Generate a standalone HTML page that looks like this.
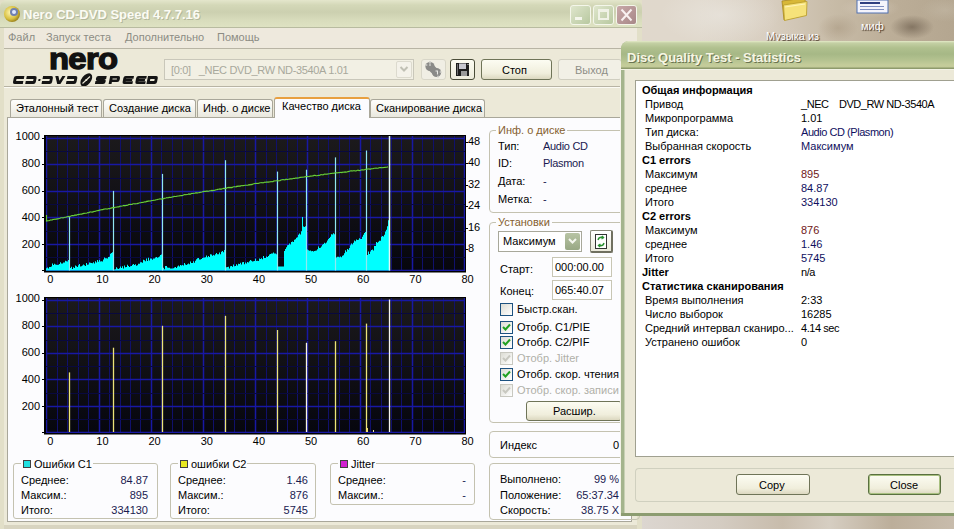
<!DOCTYPE html>
<html><head><meta charset="utf-8"><style>
html,body{margin:0;padding:0;}
body{width:954px;height:529px;overflow:hidden;position:relative;font-family:"Liberation Sans", sans-serif;font-size:11px;}
.t{position:absolute;white-space:nowrap;line-height:14px;font-family:"Liberation Sans", sans-serif;font-size:11px;}
</style></head><body>
<div style="position:absolute;left:0;top:0;width:954px;height:529px;background:
radial-gradient(ellipse 22px 12px at 912px 27px, rgba(110,95,78,0.7), rgba(110,95,78,0) 100%),
radial-gradient(ellipse 20px 14px at 838px 28px, rgba(150,130,105,0.35), rgba(150,130,105,0) 100%),
radial-gradient(ellipse 30px 10px at 870px 8px, rgba(220,210,195,0.5), rgba(220,210,195,0) 100%),
radial-gradient(ellipse 25px 10px at 790px 38px, rgba(215,205,190,0.5), rgba(215,205,190,0) 100%),
radial-gradient(ellipse 25px 12px at 945px 10px, rgba(200,190,172,0.45), rgba(200,190,172,0) 100%),
radial-gradient(ellipse 60px 30px at 720px 15px, rgba(235,232,226,0.6), rgba(235,232,226,0) 100%),
linear-gradient(90deg,#e0d8ce 0px,#e0d8cc 700px,#d8cec0 770px,#c8bca8 830px,#bcae98 890px,#b4a690 954px);"></div>
<div style="position:absolute;left:642px;top:514px;width:312px;height:15px;background:
linear-gradient(90deg,#dcd6d0,#d4ccc2 25%,#c8bcac 45%,#d6cec2 60%,#bcae9a 80%,#c8bcac)"></div><div style="position:absolute;left:0px;top:0px;width:642px;height:529px;background:#e2dfc8;"></div>
<div style="position:absolute;left:0px;top:0px;width:642px;height:28px;background:linear-gradient(180deg,#e4e6cc 0px,#d4d8b8 5px,#ccd0b0 12px,#d8dcbc 20px,#dee2c2 27px);border-radius:7px 7px 0 0;"></div>
<svg style="position:absolute;left:3px;top:5px" width="18" height="18" viewBox="0 0 18 18">
<defs><radialGradient id="ig" cx="0.4" cy="0.4" r="0.6"><stop offset="0" stop-color="#fff6b0"/><stop offset="0.7" stop-color="#d8c040"/><stop offset="1" stop-color="#a08820"/></radialGradient></defs>
<circle cx="9" cy="9" r="8" fill="url(#ig)"/><circle cx="11" cy="7" r="4" fill="#7080b0"/><circle cx="11" cy="7" r="2" fill="#e0e8ff"/></svg><div class="t" style="left:23px;top:8px;font-size:13px;font-weight:bold;color:#fbfbf4;text-shadow:1px 1px 0 #b4b89c;letter-spacing:0px">Nero CD-DVD Speed 4.7.7.16</div>
<div style="position:absolute;left:570px;top:5px;width:21px;height:20px;background:linear-gradient(135deg,#dfe6cc,#b8c8a0);border:1px solid #f4f6ea;border-radius:3px;box-sizing:border-box;"></div>
<div style="position:absolute;left:593px;top:5px;width:21px;height:20px;background:linear-gradient(135deg,#dfe6cc,#b8c8a0);border:1px solid #f4f6ea;border-radius:3px;box-sizing:border-box;"></div>
<div style="position:absolute;left:616px;top:5px;width:21px;height:20px;background:linear-gradient(135deg,#c8a8a8,#a88888);border:1px solid #f4f6ea;border-radius:3px;box-sizing:border-box;"></div>
<div style="position:absolute;left:575px;top:17px;width:7px;height:3px;background:#f4f6ec;"></div>
<div style="position:absolute;left:598px;top:9px;width:11px;height:11px;border:2px solid #f0f2e6;border-top-width:3px;box-sizing:border-box;"></div>
<svg style="position:absolute;left:616px;top:5px" width="21" height="20"><path d="M5.5 4.5 L15.5 15.5 M15.5 4.5 L5.5 15.5" stroke="#f8f0f0" stroke-width="2"/></svg>
<div style="position:absolute;left:4px;top:28px;width:633px;height:501px;background:#ece9d8;"></div>
<div style="position:absolute;left:4px;top:28px;width:633px;height:20px;background:#eee9dd;"></div>
<div style="position:absolute;left:0px;top:27px;width:642px;height:1px;background:#b8bba0;"></div>
<div style="position:absolute;left:4px;top:48px;width:633px;height:1px;background:#b8b4a4;"></div>
<div class="t" style="left:8px;top:30px;font-size:11px;color:#8c8c84;font-weight:normal;">Файл</div>
<div class="t" style="left:46px;top:30px;font-size:11px;color:#8c8c84;font-weight:normal;">Запуск теста</div>
<div class="t" style="left:125px;top:30px;font-size:11px;color:#8c8c84;font-weight:normal;">Дополнительно</div>
<div class="t" style="left:217px;top:30px;font-size:11px;color:#8c8c84;font-weight:normal;">Помощь</div>
<div class="t" style="left:49px;top:43px;font-size:29px;font-weight:bold;color:#111;letter-spacing:-0.6px;line-height:32px;transform:scaleX(1.13);transform-origin:0 0;-webkit-text-stroke:1.3px #111">nero</div>
<svg style="position:absolute;left:0;top:0" width="170" height="90"><g fill="#141414" fill-rule="evenodd"><path transform="translate(12.6,76) matrix(1,0,-0.2,1,1.6,0)" d="M10.2,0 H2 Q0,0 0,2 V6 Q0,8 2,8 H10.2 V5.1 H2.9 V2.9 H10.2 Z"/><path transform="translate(25.2,76) matrix(1,0,-0.2,1,1.6,0)" d="M0,0 H8.2 Q10.2,0 10.2,2 V6 Q10.2,8 8.2,8 H0 V5.1 H7.299999999999999 V2.9 H0 Z"/><path transform="translate(41.5,76) matrix(1,0,-0.2,1,1.6,0)" d="M0,0 H8.2 Q10.2,0 10.2,2 V6 Q10.2,8 8.2,8 H0 V5.1 H7.299999999999999 V2.9 H0 Z"/><path transform="translate(53.7,76) matrix(1,0,-0.2,1,1.6,0)" d="M0,0 H3.1 L5.1,4.699999999999999 L7.099999999999999,0 H10.2 L6.699999999999999,8 H3.4999999999999996 Z"/><path transform="translate(65.9,76) matrix(1,0,-0.2,1,1.6,0)" d="M0,0 H8.2 Q10.2,0 10.2,2 V6 Q10.2,8 8.2,8 H0 V5.1 H7.299999999999999 V2.9 H0 Z"/><path transform="translate(94.9,76) matrix(1,0,-0.2,1,1.6,0)" d="M10.2,0 H2 Q0,0 0,2 V3 Q0,5 2,5 H7.299999999999999 V5.1 H0 V8 H8.2 Q10.2,8 10.2,6 V5 Q10.2,3 8.2,3 H2.9 V2.9 H10.2 Z"/><path transform="translate(108.6,76) matrix(1,0,-0.2,1,1.6,0)" d="M0,8 V0 H8.2 Q10.2,0 10.2,2 V4 Q10.2,6 8.2,6 H2.9 V8 Z M2.9,2.6 V3.4 H7.299999999999999 V2.6 Z"/><path transform="translate(122.2,76) matrix(1,0,-0.2,1,1.6,0)" d="M10.2,0 H2 Q0,0 0,2 V6 Q0,8 2,8 H10.2 V5.3 H2.9 V4.9 H9.2 V3.1 H2.9 V2.6999999999999997 H10.2 Z"/><path transform="translate(135.0,76) matrix(1,0,-0.2,1,1.6,0)" d="M10.2,0 H2 Q0,0 0,2 V6 Q0,8 2,8 H10.2 V5.3 H2.9 V4.9 H9.2 V3.1 H2.9 V2.6999999999999997 H10.2 Z"/><path transform="translate(146.4,76) matrix(1,0,-0.2,1,1.6,0)" d="M0,0 H8.2 Q10.2,0 10.2,2 V6 Q10.2,8 8.2,8 H0 Z M2.9,2.9 V5.1 H7.299999999999999 V2.9 Z"/><rect transform="translate(38.2,79) matrix(1,0,-0.2,1,0.4,0)" x="0" y="0" width="2" height="2"/><ellipse cx="86.3" cy="79.9" rx="4.6" ry="7.6" transform="rotate(38 86.3 79.9)"/></g><path d="M82.5 83.5 L90 76.5" stroke="#ece9d8" stroke-width="1.1"/><circle cx="86.3" cy="79.9" r="1" fill="#ece9d8"/></svg><div style="position:absolute;left:164px;top:59px;width:250px;height:21px;border:1px solid #c9c7ba;background:#f2f0e4;box-sizing:border-box;"></div>
<div class="t" style="left:171px;top:63px;font-size:11px;color:#a8a89c;font-weight:normal;letter-spacing:-0.35px">[0:0]&nbsp;&nbsp; _NEC DVD_RW ND-3540A 1.01</div>
<div style="position:absolute;left:396px;top:61px;width:16px;height:17px;background:#f4f2ea;border:1px solid #dcdace;border-radius:2px;box-sizing:border-box;"></div>
<svg style="position:absolute;left:399px;top:65px" width="10" height="8"><path d="M1.5 2 L5 5.5 L8.5 2" stroke="#c0c0b4" stroke-width="2" fill="none"/></svg>
<div style="position:absolute;left:421px;top:59px;width:25px;height:21px;border:1px solid #d8d6c8;background:#f0eee4;border-radius:3px;box-sizing:border-box;"></div>
<svg style="position:absolute;left:421px;top:59px" width="25" height="21"><g fill="#8a8a88"><circle cx="9" cy="7.5" r="4.6"/><circle cx="15.5" cy="13.5" r="4.6"/><rect x="8" y="7" width="8" height="7" transform="rotate(45 12 10.5)"/></g><g fill="#c4c4c0"><circle cx="9" cy="3.5" r="1.2"/><circle cx="5.5" cy="6" r="1"/><circle cx="19.5" cy="13" r="1"/><circle cx="17" cy="17.5" r="1.1"/></g><path d="M8 6 L10 6 M14.5 12 L16.5 12 L16.5 15.5" stroke="#e8e8e4" stroke-width="1.1" fill="none"/></svg>
<div style="position:absolute;left:450px;top:59px;width:25px;height:21px;border:1px solid #4a4c38;background:linear-gradient(180deg,#fcfcf2,#eeecdc);border-radius:3px;box-sizing:border-box;"></div>
<svg style="position:absolute;left:455px;top:62px" width="16" height="16"><rect x="1" y="1" width="13" height="13" fill="#1e1e1e"/><rect x="2" y="2" width="1" height="11" fill="#707070"/><rect x="4" y="1.5" width="7" height="5.5" fill="#c8c8d0"/><rect x="6" y="9" width="6" height="5" fill="#9a9a9a"/><rect x="12.5" y="2" width="1" height="1" fill="#e0e0e0"/></svg>
<div style="position:absolute;left:481px;top:59px;width:71px;height:21px;border:1px solid #6f7458;background:linear-gradient(180deg,#fcfcf2,#f0eedc 70%,#dcd8c0);border-radius:3px;box-sizing:border-box;"></div>
<div class="t" style="left:502px;top:63px;font-size:11px;color:#000;font-weight:normal;">Стоп</div>
<div style="position:absolute;left:558px;top:59px;width:64px;height:21px;border:1px solid #d0cec0;background:#f2f0e6;border-radius:3px;box-sizing:border-box;"></div>
<div class="t" style="left:575px;top:63px;font-size:11px;color:#8e8e86;font-weight:normal;">Выход</div>
<div style="position:absolute;left:4px;top:86px;width:633px;height:1px;background:#b8b4a4;"></div>
<div style="position:absolute;left:4px;top:87px;width:633px;height:1px;background:#fbfaf4;"></div>
<div style="position:absolute;left:10px;top:99px;width:92px;height:19px;background:linear-gradient(180deg,#fefefc,#f2f1ea 60%,#e8e6dc);border:1px solid #a9a79a;border-bottom:none;border-radius:3px 3px 0 0;box-sizing:border-box;"></div>
<div class="t" style="left:16px;top:101px;font-size:11px;color:#000;font-weight:normal;">Эталонный тест</div>
<div style="position:absolute;left:103px;top:99px;width:93px;height:19px;background:linear-gradient(180deg,#fefefc,#f2f1ea 60%,#e8e6dc);border:1px solid #a9a79a;border-bottom:none;border-radius:3px 3px 0 0;box-sizing:border-box;"></div>
<div class="t" style="left:109px;top:101px;font-size:11px;color:#000;font-weight:normal;">Создание диска</div>
<div style="position:absolute;left:197px;top:99px;width:76px;height:19px;background:linear-gradient(180deg,#fefefc,#f2f1ea 60%,#e8e6dc);border:1px solid #a9a79a;border-bottom:none;border-radius:3px 3px 0 0;box-sizing:border-box;"></div>
<div class="t" style="left:203px;top:101px;font-size:11px;color:#000;font-weight:normal;">Инф. о диске</div>
<div style="position:absolute;left:370px;top:99px;width:115px;height:19px;background:linear-gradient(180deg,#fefefc,#f2f1ea 60%,#e8e6dc);border:1px solid #a9a79a;border-bottom:none;border-radius:3px 3px 0 0;box-sizing:border-box;"></div>
<div class="t" style="left:376px;top:101px;font-size:11px;color:#000;font-weight:normal;">Сканирование диска</div>
<div style="position:absolute;left:4px;top:525px;width:633px;height:4px;background:#d8d4c0;"></div>
<div style="position:absolute;left:7px;top:117px;width:625px;height:405px;background:#fcfcfe;border:1px solid #a9a79a;box-sizing:border-box;"></div>
<div style="position:absolute;left:274px;top:97px;width:96px;height:21px;background:#fcfcfe;border:1px solid #a9a79a;border-bottom:none;border-top:2px solid #e8a040;border-radius:3px 3px 0 0;box-sizing:border-box;"></div>
<div class="t" style="left:282px;top:99px;font-size:11px;color:#000;font-weight:normal;">Качество диска</div>
<div style="position:absolute;left:489px;top:130px;width:151px;height:83px;border:1px solid #c4c2b0;border-radius:4px;box-sizing:border-box;"></div>
<div class="t" style="left:496px;top:123px;padding:0 2px;background:#fcfcfe;font-size:11px;color:#85602e">Инф. о диске</div>
<div class="t" style="left:498px;top:139px;font-size:11px;color:#000;font-weight:normal;">Тип:</div>
<div class="t" style="left:543px;top:139px;font-size:11px;color:#1a1a50;font-weight:normal;letter-spacing:-0.3px">Audio CD</div>
<div class="t" style="left:498px;top:156px;font-size:11px;color:#000;font-weight:normal;">ID:</div>
<div class="t" style="left:543px;top:156px;font-size:11px;color:#1a1a50;font-weight:normal;letter-spacing:-0.3px">Plasmon</div>
<div class="t" style="left:498px;top:174px;font-size:11px;color:#000;font-weight:normal;">Дата:</div>
<div class="t" style="left:543px;top:174px;font-size:11px;color:#1a1a50;font-weight:normal;letter-spacing:-0.3px">-</div>
<div class="t" style="left:498px;top:192px;font-size:11px;color:#000;font-weight:normal;">Метка:</div>
<div class="t" style="left:543px;top:192px;font-size:11px;color:#1a1a50;font-weight:normal;letter-spacing:-0.3px">-</div>
<div style="position:absolute;left:489px;top:222px;width:151px;height:201px;border:1px solid #c4c2b0;border-radius:4px;box-sizing:border-box;"></div>
<div class="t" style="left:496px;top:215px;padding:0 2px;background:#fcfcfe;font-size:11px;color:#85602e">Установки</div>
<div style="position:absolute;left:498px;top:231px;width:84px;height:21px;border:1px solid #a8a89a;background:#fff;box-sizing:border-box;"></div>
<div class="t" style="left:503px;top:234px;font-size:11px;color:#000;font-weight:normal;">Максимум</div>
<div style="position:absolute;left:565px;top:233px;width:15px;height:17px;background:linear-gradient(180deg,#b8c4a4,#98a884);border-radius:2px;"></div>
<svg style="position:absolute;left:567px;top:237px" width="11" height="9"><path d="M2 2 L5.5 5.5 L9 2" stroke="#f4f6ee" stroke-width="2" fill="none"/></svg>
<div style="position:absolute;left:590px;top:230px;width:23px;height:23px;border:1px solid #888878;border-right:2px solid #707060;border-bottom:2px solid #707060;background:linear-gradient(180deg,#fff,#eceadc);border-radius:2px;box-sizing:border-box;"></div>
<svg style="position:absolute;left:593px;top:233px" width="16" height="17"><rect x="2.5" y="1.5" width="11" height="14" fill="#fff" stroke="#333" stroke-width="1"/><path d="M5 7 Q6 3.5 10 4.5 M9 3 L10.5 4.6 L8.5 6" stroke="#2a9030" stroke-width="1.4" fill="none"/><path d="M11 10 Q10 13.5 6 12.5 M7 14 L5.5 12.4 L7.5 11" stroke="#2a9030" stroke-width="1.4" fill="none"/></svg>
<div class="t" style="left:500px;top:262px;font-size:11px;color:#000;font-weight:normal;">Старт:</div>
<div style="position:absolute;left:552px;top:257px;width:60px;height:20px;border:1px solid #c8c6b4;background:#fff;box-sizing:border-box;"></div>
<div class="t" style="left:555px;top:260px;font-size:11px;color:#000;font-weight:normal;">000:00.00</div>
<div class="t" style="left:500px;top:284px;font-size:11px;color:#000;font-weight:normal;">Конец:</div>
<div style="position:absolute;left:552px;top:280px;width:60px;height:20px;border:1px solid #c8c6b4;background:#fff;box-sizing:border-box;"></div>
<div class="t" style="left:555px;top:283px;font-size:11px;color:#000;font-weight:normal;">065:40.07</div>
<div style="position:absolute;left:500px;top:303px;width:13px;height:13px;border:1px solid #1c5180;background:linear-gradient(135deg,#dcdcd4,#fff);box-sizing:border-box;"></div>
<div class="t" style="left:517px;top:302px;font-size:11px;color:#000;font-weight:normal;">Быстр.скан.</div>
<div style="position:absolute;left:500px;top:321px;width:13px;height:13px;border:1px solid #1c5180;background:linear-gradient(135deg,#dcdcd4,#fff);box-sizing:border-box;"></div>
<svg style="position:absolute;left:500px;top:321px" width="13" height="13"><path d="M3 6 L5.5 8.5 L10 3.5" stroke="#21a121" stroke-width="2" fill="none"/></svg>
<div class="t" style="left:517px;top:320px;font-size:11px;color:#000;font-weight:normal;">Отобр. C1/PIE</div>
<div style="position:absolute;left:500px;top:336px;width:13px;height:13px;border:1px solid #1c5180;background:linear-gradient(135deg,#dcdcd4,#fff);box-sizing:border-box;"></div>
<svg style="position:absolute;left:500px;top:336px" width="13" height="13"><path d="M3 6 L5.5 8.5 L10 3.5" stroke="#21a121" stroke-width="2" fill="none"/></svg>
<div class="t" style="left:517px;top:335px;font-size:11px;color:#000;font-weight:normal;">Отобр. C2/PIF</div>
<div style="position:absolute;left:500px;top:352px;width:13px;height:13px;border:1px solid #c8c8c0;background:linear-gradient(135deg,#dcdcd4,#fff);box-sizing:border-box;"></div>
<svg style="position:absolute;left:500px;top:352px" width="13" height="13"><path d="M3 6 L5.5 8.5 L10 3.5" stroke="#c8c8c0" stroke-width="2" fill="none"/></svg>
<div class="t" style="left:517px;top:351px;font-size:11px;color:#b0b0a8;font-weight:normal;">Отобр. Jitter</div>
<div style="position:absolute;left:500px;top:368px;width:13px;height:13px;border:1px solid #1c5180;background:linear-gradient(135deg,#dcdcd4,#fff);box-sizing:border-box;"></div>
<svg style="position:absolute;left:500px;top:368px" width="13" height="13"><path d="M3 6 L5.5 8.5 L10 3.5" stroke="#21a121" stroke-width="2" fill="none"/></svg>
<div class="t" style="left:517px;top:367px;font-size:11px;color:#000;font-weight:normal;">Отобр. скор. чтения</div>
<div style="position:absolute;left:500px;top:384px;width:13px;height:13px;border:1px solid #c8c8c0;background:linear-gradient(135deg,#dcdcd4,#fff);box-sizing:border-box;"></div>
<svg style="position:absolute;left:500px;top:384px" width="13" height="13"><path d="M3 6 L5.5 8.5 L10 3.5" stroke="#c8c8c0" stroke-width="2" fill="none"/></svg>
<div class="t" style="left:517px;top:383px;font-size:11px;color:#b0b0a8;font-weight:normal;">Отобр. скор. записи</div>
<div style="position:absolute;left:526px;top:401px;width:96px;height:20px;border:1px solid #6f7458;background:linear-gradient(180deg,#fcfcf2,#f0eedc 70%,#dcd8c0);border-radius:3px;box-sizing:border-box;"></div>
<div class="t" style="left:553px;top:404px;font-size:11px;color:#000;font-weight:normal;">Расшир.</div>
<div style="position:absolute;left:489px;top:431px;width:151px;height:27px;border:1px solid #c4c2b0;border-radius:4px;box-sizing:border-box;"></div>
<div class="t" style="left:500px;top:438px;font-size:11px;color:#000;font-weight:normal;">Индекс</div>
<div class="t" style="left:319px;width:300px;text-align:right;top:438px;font-size:11px;color:#000;font-weight:normal;">0</div>
<div style="position:absolute;left:489px;top:463px;width:151px;height:57px;border:1px solid #c4c2b0;border-radius:4px;box-sizing:border-box;"></div>
<div class="t" style="left:500px;top:472px;font-size:11px;color:#000;font-weight:normal;">Выполнено:</div>
<div class="t" style="left:319px;width:300px;text-align:right;top:472px;font-size:11px;color:#1a1a50;font-weight:normal;">99 %</div>
<div class="t" style="left:500px;top:488px;font-size:11px;color:#000;font-weight:normal;">Положение:</div>
<div class="t" style="left:319px;width:300px;text-align:right;top:488px;font-size:11px;color:#1a1a50;font-weight:normal;">65:37.34</div>
<div class="t" style="left:500px;top:503px;font-size:11px;color:#000;font-weight:normal;">Скорость:</div>
<div class="t" style="left:319px;width:300px;text-align:right;top:503px;font-size:11px;color:#1a1a50;font-weight:normal;">38.75 X</div>
<div style="position:absolute;left:13px;top:463px;width:145px;height:56px;border:1px solid #c4c2b0;border-radius:3px;box-sizing:border-box;"></div>
<div class="t" style="left:21px;top:457px;padding:0 1px 0 2px;background:#fcfcfe;"><span style="display:inline-block;width:8px;height:8px;background:#20e0e0;border:1px solid #404040;box-sizing:border-box;margin-right:3px;vertical-align:-0px"></span>Ошибки C1</div>
<div class="t" style="left:21px;top:473px;font-size:11px;color:#000;font-weight:normal;">Среднее:</div>
<div class="t" style="left:-152px;width:300px;text-align:right;top:473px;font-size:11px;color:#1a1a50;font-weight:normal;">84.87</div>
<div class="t" style="left:21px;top:488px;font-size:11px;color:#000;font-weight:normal;">Максим.:</div>
<div class="t" style="left:-152px;width:300px;text-align:right;top:488px;font-size:11px;color:#1a1a50;font-weight:normal;">895</div>
<div class="t" style="left:21px;top:503px;font-size:11px;color:#000;font-weight:normal;">Итого:</div>
<div class="t" style="left:-152px;width:300px;text-align:right;top:503px;font-size:11px;color:#1a1a50;font-weight:normal;">334130</div>
<div style="position:absolute;left:170px;top:463px;width:146px;height:56px;border:1px solid #c4c2b0;border-radius:3px;box-sizing:border-box;"></div>
<div class="t" style="left:178px;top:457px;padding:0 1px 0 2px;background:#fcfcfe;"><span style="display:inline-block;width:8px;height:8px;background:#e8e820;border:1px solid #404040;box-sizing:border-box;margin-right:3px;vertical-align:-0px"></span>ошибки C2</div>
<div class="t" style="left:178px;top:473px;font-size:11px;color:#000;font-weight:normal;">Среднее:</div>
<div class="t" style="left:8px;width:300px;text-align:right;top:473px;font-size:11px;color:#1a1a50;font-weight:normal;">1.46</div>
<div class="t" style="left:178px;top:488px;font-size:11px;color:#000;font-weight:normal;">Максим.:</div>
<div class="t" style="left:8px;width:300px;text-align:right;top:488px;font-size:11px;color:#1a1a50;font-weight:normal;">876</div>
<div class="t" style="left:178px;top:503px;font-size:11px;color:#000;font-weight:normal;">Итого:</div>
<div class="t" style="left:8px;width:300px;text-align:right;top:503px;font-size:11px;color:#1a1a50;font-weight:normal;">5745</div>
<div style="position:absolute;left:330px;top:463px;width:145px;height:42px;border:1px solid #c4c2b0;border-radius:3px;box-sizing:border-box;"></div>
<div class="t" style="left:338px;top:457px;padding:0 1px 0 2px;background:#fcfcfe;"><span style="display:inline-block;width:8px;height:8px;background:#d020d0;border:1px solid #404040;box-sizing:border-box;margin-right:3px;vertical-align:-0px"></span>Jitter</div>
<div class="t" style="left:338px;top:473px;font-size:11px;color:#000;font-weight:normal;">Среднее:</div>
<div class="t" style="left:166px;width:300px;text-align:right;top:473px;font-size:11px;color:#1a1a50;font-weight:normal;">-</div>
<div class="t" style="left:338px;top:488px;font-size:11px;color:#000;font-weight:normal;">Максим.:</div>
<div class="t" style="left:166px;width:300px;text-align:right;top:488px;font-size:11px;color:#1a1a50;font-weight:normal;">-</div>
<svg style="position:absolute;left:0;top:0" width="954" height="529">
<defs><linearGradient id="cbg" x1="0" y1="0" x2="0" y2="1"><stop offset="0" stop-color="#1c1a1c"/><stop offset="1" stop-color="#06060e"/></linearGradient><filter id="blur1" filterUnits="userSpaceOnUse" x="0" y="0" width="954" height="529"><feGaussianBlur stdDeviation="0.6"/></filter></defs>
<rect x="44" y="135.0" width="422" height="137" fill="url(#cbg)"/>
<g>
<line x1="46.5" y1="136.0" x2="46.5" y2="271.0" stroke="#1818a4" stroke-width="3" stroke-opacity="0.25"/>
<line x1="46.5" y1="136.0" x2="46.5" y2="271.0" stroke="#1818a4" stroke-width="1"/>
<line x1="57.5" y1="136.0" x2="57.5" y2="271.0" stroke="#10106c" stroke-width="3" stroke-opacity="0.0"/>
<line x1="57.5" y1="136.0" x2="57.5" y2="271.0" stroke="#10106c" stroke-width="1"/>
<line x1="67.5" y1="136.0" x2="67.5" y2="271.0" stroke="#10106c" stroke-width="3" stroke-opacity="0.0"/>
<line x1="67.5" y1="136.0" x2="67.5" y2="271.0" stroke="#10106c" stroke-width="1"/>
<line x1="78.5" y1="136.0" x2="78.5" y2="271.0" stroke="#10106c" stroke-width="3" stroke-opacity="0.0"/>
<line x1="78.5" y1="136.0" x2="78.5" y2="271.0" stroke="#10106c" stroke-width="1"/>
<line x1="88.5" y1="136.0" x2="88.5" y2="271.0" stroke="#10106c" stroke-width="3" stroke-opacity="0.0"/>
<line x1="88.5" y1="136.0" x2="88.5" y2="271.0" stroke="#10106c" stroke-width="1"/>
<line x1="99.5" y1="136.0" x2="99.5" y2="271.0" stroke="#1818a4" stroke-width="3" stroke-opacity="0.25"/>
<line x1="99.5" y1="136.0" x2="99.5" y2="271.0" stroke="#1818a4" stroke-width="1"/>
<line x1="109.5" y1="136.0" x2="109.5" y2="271.0" stroke="#10106c" stroke-width="3" stroke-opacity="0.0"/>
<line x1="109.5" y1="136.0" x2="109.5" y2="271.0" stroke="#10106c" stroke-width="1"/>
<line x1="120.5" y1="136.0" x2="120.5" y2="271.0" stroke="#10106c" stroke-width="3" stroke-opacity="0.0"/>
<line x1="120.5" y1="136.0" x2="120.5" y2="271.0" stroke="#10106c" stroke-width="1"/>
<line x1="130.5" y1="136.0" x2="130.5" y2="271.0" stroke="#10106c" stroke-width="3" stroke-opacity="0.0"/>
<line x1="130.5" y1="136.0" x2="130.5" y2="271.0" stroke="#10106c" stroke-width="1"/>
<line x1="140.5" y1="136.0" x2="140.5" y2="271.0" stroke="#10106c" stroke-width="3" stroke-opacity="0.0"/>
<line x1="140.5" y1="136.0" x2="140.5" y2="271.0" stroke="#10106c" stroke-width="1"/>
<line x1="151.5" y1="136.0" x2="151.5" y2="271.0" stroke="#1818a4" stroke-width="3" stroke-opacity="0.25"/>
<line x1="151.5" y1="136.0" x2="151.5" y2="271.0" stroke="#1818a4" stroke-width="1"/>
<line x1="161.5" y1="136.0" x2="161.5" y2="271.0" stroke="#10106c" stroke-width="3" stroke-opacity="0.0"/>
<line x1="161.5" y1="136.0" x2="161.5" y2="271.0" stroke="#10106c" stroke-width="1"/>
<line x1="172.5" y1="136.0" x2="172.5" y2="271.0" stroke="#10106c" stroke-width="3" stroke-opacity="0.0"/>
<line x1="172.5" y1="136.0" x2="172.5" y2="271.0" stroke="#10106c" stroke-width="1"/>
<line x1="182.5" y1="136.0" x2="182.5" y2="271.0" stroke="#10106c" stroke-width="3" stroke-opacity="0.0"/>
<line x1="182.5" y1="136.0" x2="182.5" y2="271.0" stroke="#10106c" stroke-width="1"/>
<line x1="193.5" y1="136.0" x2="193.5" y2="271.0" stroke="#10106c" stroke-width="3" stroke-opacity="0.0"/>
<line x1="193.5" y1="136.0" x2="193.5" y2="271.0" stroke="#10106c" stroke-width="1"/>
<line x1="203.5" y1="136.0" x2="203.5" y2="271.0" stroke="#1818a4" stroke-width="3" stroke-opacity="0.25"/>
<line x1="203.5" y1="136.0" x2="203.5" y2="271.0" stroke="#1818a4" stroke-width="1"/>
<line x1="213.5" y1="136.0" x2="213.5" y2="271.0" stroke="#10106c" stroke-width="3" stroke-opacity="0.0"/>
<line x1="213.5" y1="136.0" x2="213.5" y2="271.0" stroke="#10106c" stroke-width="1"/>
<line x1="224.5" y1="136.0" x2="224.5" y2="271.0" stroke="#10106c" stroke-width="3" stroke-opacity="0.0"/>
<line x1="224.5" y1="136.0" x2="224.5" y2="271.0" stroke="#10106c" stroke-width="1"/>
<line x1="234.5" y1="136.0" x2="234.5" y2="271.0" stroke="#10106c" stroke-width="3" stroke-opacity="0.0"/>
<line x1="234.5" y1="136.0" x2="234.5" y2="271.0" stroke="#10106c" stroke-width="1"/>
<line x1="245.5" y1="136.0" x2="245.5" y2="271.0" stroke="#10106c" stroke-width="3" stroke-opacity="0.0"/>
<line x1="245.5" y1="136.0" x2="245.5" y2="271.0" stroke="#10106c" stroke-width="1"/>
<line x1="255.5" y1="136.0" x2="255.5" y2="271.0" stroke="#1818a4" stroke-width="3" stroke-opacity="0.25"/>
<line x1="255.5" y1="136.0" x2="255.5" y2="271.0" stroke="#1818a4" stroke-width="1"/>
<line x1="266.5" y1="136.0" x2="266.5" y2="271.0" stroke="#10106c" stroke-width="3" stroke-opacity="0.0"/>
<line x1="266.5" y1="136.0" x2="266.5" y2="271.0" stroke="#10106c" stroke-width="1"/>
<line x1="276.5" y1="136.0" x2="276.5" y2="271.0" stroke="#10106c" stroke-width="3" stroke-opacity="0.0"/>
<line x1="276.5" y1="136.0" x2="276.5" y2="271.0" stroke="#10106c" stroke-width="1"/>
<line x1="287.5" y1="136.0" x2="287.5" y2="271.0" stroke="#10106c" stroke-width="3" stroke-opacity="0.0"/>
<line x1="287.5" y1="136.0" x2="287.5" y2="271.0" stroke="#10106c" stroke-width="1"/>
<line x1="297.5" y1="136.0" x2="297.5" y2="271.0" stroke="#10106c" stroke-width="3" stroke-opacity="0.0"/>
<line x1="297.5" y1="136.0" x2="297.5" y2="271.0" stroke="#10106c" stroke-width="1"/>
<line x1="307.5" y1="136.0" x2="307.5" y2="271.0" stroke="#1818a4" stroke-width="3" stroke-opacity="0.25"/>
<line x1="307.5" y1="136.0" x2="307.5" y2="271.0" stroke="#1818a4" stroke-width="1"/>
<line x1="318.5" y1="136.0" x2="318.5" y2="271.0" stroke="#10106c" stroke-width="3" stroke-opacity="0.0"/>
<line x1="318.5" y1="136.0" x2="318.5" y2="271.0" stroke="#10106c" stroke-width="1"/>
<line x1="328.5" y1="136.0" x2="328.5" y2="271.0" stroke="#10106c" stroke-width="3" stroke-opacity="0.0"/>
<line x1="328.5" y1="136.0" x2="328.5" y2="271.0" stroke="#10106c" stroke-width="1"/>
<line x1="339.5" y1="136.0" x2="339.5" y2="271.0" stroke="#10106c" stroke-width="3" stroke-opacity="0.0"/>
<line x1="339.5" y1="136.0" x2="339.5" y2="271.0" stroke="#10106c" stroke-width="1"/>
<line x1="349.5" y1="136.0" x2="349.5" y2="271.0" stroke="#10106c" stroke-width="3" stroke-opacity="0.0"/>
<line x1="349.5" y1="136.0" x2="349.5" y2="271.0" stroke="#10106c" stroke-width="1"/>
<line x1="360.5" y1="136.0" x2="360.5" y2="271.0" stroke="#1818a4" stroke-width="3" stroke-opacity="0.25"/>
<line x1="360.5" y1="136.0" x2="360.5" y2="271.0" stroke="#1818a4" stroke-width="1"/>
<line x1="370.5" y1="136.0" x2="370.5" y2="271.0" stroke="#10106c" stroke-width="3" stroke-opacity="0.0"/>
<line x1="370.5" y1="136.0" x2="370.5" y2="271.0" stroke="#10106c" stroke-width="1"/>
<line x1="381.5" y1="136.0" x2="381.5" y2="271.0" stroke="#10106c" stroke-width="3" stroke-opacity="0.0"/>
<line x1="381.5" y1="136.0" x2="381.5" y2="271.0" stroke="#10106c" stroke-width="1"/>
<line x1="391.5" y1="136.0" x2="391.5" y2="271.0" stroke="#10106c" stroke-width="3" stroke-opacity="0.0"/>
<line x1="391.5" y1="136.0" x2="391.5" y2="271.0" stroke="#10106c" stroke-width="1"/>
<line x1="401.5" y1="136.0" x2="401.5" y2="271.0" stroke="#10106c" stroke-width="3" stroke-opacity="0.0"/>
<line x1="401.5" y1="136.0" x2="401.5" y2="271.0" stroke="#10106c" stroke-width="1"/>
<line x1="412.5" y1="136.0" x2="412.5" y2="271.0" stroke="#1818a4" stroke-width="3" stroke-opacity="0.25"/>
<line x1="412.5" y1="136.0" x2="412.5" y2="271.0" stroke="#1818a4" stroke-width="1"/>
<line x1="422.5" y1="136.0" x2="422.5" y2="271.0" stroke="#10106c" stroke-width="3" stroke-opacity="0.0"/>
<line x1="422.5" y1="136.0" x2="422.5" y2="271.0" stroke="#10106c" stroke-width="1"/>
<line x1="433.5" y1="136.0" x2="433.5" y2="271.0" stroke="#10106c" stroke-width="3" stroke-opacity="0.0"/>
<line x1="433.5" y1="136.0" x2="433.5" y2="271.0" stroke="#10106c" stroke-width="1"/>
<line x1="443.5" y1="136.0" x2="443.5" y2="271.0" stroke="#10106c" stroke-width="3" stroke-opacity="0.0"/>
<line x1="443.5" y1="136.0" x2="443.5" y2="271.0" stroke="#10106c" stroke-width="1"/>
<line x1="454.5" y1="136.0" x2="454.5" y2="271.0" stroke="#10106c" stroke-width="3" stroke-opacity="0.0"/>
<line x1="454.5" y1="136.0" x2="454.5" y2="271.0" stroke="#10106c" stroke-width="1"/>
<line x1="464.5" y1="136.0" x2="464.5" y2="271.0" stroke="#1818a4" stroke-width="3" stroke-opacity="0.25"/>
<line x1="464.5" y1="136.0" x2="464.5" y2="271.0" stroke="#1818a4" stroke-width="1"/>
<line x1="45" y1="270.5" x2="465" y2="270.5" stroke="#1818a4" stroke-width="3" stroke-opacity="0.25"/>
<line x1="45" y1="270.5" x2="465" y2="270.5" stroke="#1818a4" stroke-width="1"/>
<line x1="45" y1="257.5" x2="465" y2="257.5" stroke="#09093e" stroke-width="3" stroke-opacity="0.0"/>
<line x1="45" y1="257.5" x2="465" y2="257.5" stroke="#09093e" stroke-width="1"/>
<line x1="45" y1="244.5" x2="465" y2="244.5" stroke="#1818a4" stroke-width="3" stroke-opacity="0.25"/>
<line x1="45" y1="244.5" x2="465" y2="244.5" stroke="#1818a4" stroke-width="1"/>
<line x1="45" y1="231.5" x2="465" y2="231.5" stroke="#09093e" stroke-width="3" stroke-opacity="0.0"/>
<line x1="45" y1="231.5" x2="465" y2="231.5" stroke="#09093e" stroke-width="1"/>
<line x1="45" y1="217.5" x2="465" y2="217.5" stroke="#1818a4" stroke-width="3" stroke-opacity="0.25"/>
<line x1="45" y1="217.5" x2="465" y2="217.5" stroke="#1818a4" stroke-width="1"/>
<line x1="45" y1="204.5" x2="465" y2="204.5" stroke="#09093e" stroke-width="3" stroke-opacity="0.0"/>
<line x1="45" y1="204.5" x2="465" y2="204.5" stroke="#09093e" stroke-width="1"/>
<line x1="45" y1="191.5" x2="465" y2="191.5" stroke="#1818a4" stroke-width="3" stroke-opacity="0.25"/>
<line x1="45" y1="191.5" x2="465" y2="191.5" stroke="#1818a4" stroke-width="1"/>
<line x1="45" y1="178.5" x2="465" y2="178.5" stroke="#09093e" stroke-width="3" stroke-opacity="0.0"/>
<line x1="45" y1="178.5" x2="465" y2="178.5" stroke="#09093e" stroke-width="1"/>
<line x1="45" y1="164.5" x2="465" y2="164.5" stroke="#1818a4" stroke-width="3" stroke-opacity="0.25"/>
<line x1="45" y1="164.5" x2="465" y2="164.5" stroke="#1818a4" stroke-width="1"/>
<line x1="45" y1="151.5" x2="465" y2="151.5" stroke="#09093e" stroke-width="3" stroke-opacity="0.0"/>
<line x1="45" y1="151.5" x2="465" y2="151.5" stroke="#09093e" stroke-width="1"/>
<line x1="45" y1="138.5" x2="465" y2="138.5" stroke="#1818a4" stroke-width="3" stroke-opacity="0.25"/>
<line x1="45" y1="138.5" x2="465" y2="138.5" stroke="#1818a4" stroke-width="1"/>
</g>
<rect x="44" y="135.0" width="422" height="1" fill="#000"/>
<rect x="44" y="271.0" width="422" height="1.5" fill="#000"/>
<rect x="44" y="135.0" width="2" height="137" fill="#000"/>
<rect x="465" y="135.0" width="1" height="137" fill="#000"/>
<line x1="42" y1="270.5" x2="44" y2="270.5" stroke="#000"/>
<line x1="42" y1="244.5" x2="44" y2="244.5" stroke="#000"/>
<line x1="42" y1="217.5" x2="44" y2="217.5" stroke="#000"/>
<line x1="42" y1="191.5" x2="44" y2="191.5" stroke="#000"/>
<line x1="42" y1="164.5" x2="44" y2="164.5" stroke="#000"/>
<line x1="42" y1="138.5" x2="44" y2="138.5" stroke="#000"/>
<rect x="44" y="297.0" width="422" height="137" fill="url(#cbg)"/>
<g>
<line x1="46.5" y1="298.0" x2="46.5" y2="433.0" stroke="#1818a4" stroke-width="3" stroke-opacity="0.25"/>
<line x1="46.5" y1="298.0" x2="46.5" y2="433.0" stroke="#1818a4" stroke-width="1"/>
<line x1="57.5" y1="298.0" x2="57.5" y2="433.0" stroke="#10106c" stroke-width="3" stroke-opacity="0.0"/>
<line x1="57.5" y1="298.0" x2="57.5" y2="433.0" stroke="#10106c" stroke-width="1"/>
<line x1="67.5" y1="298.0" x2="67.5" y2="433.0" stroke="#10106c" stroke-width="3" stroke-opacity="0.0"/>
<line x1="67.5" y1="298.0" x2="67.5" y2="433.0" stroke="#10106c" stroke-width="1"/>
<line x1="78.5" y1="298.0" x2="78.5" y2="433.0" stroke="#10106c" stroke-width="3" stroke-opacity="0.0"/>
<line x1="78.5" y1="298.0" x2="78.5" y2="433.0" stroke="#10106c" stroke-width="1"/>
<line x1="88.5" y1="298.0" x2="88.5" y2="433.0" stroke="#10106c" stroke-width="3" stroke-opacity="0.0"/>
<line x1="88.5" y1="298.0" x2="88.5" y2="433.0" stroke="#10106c" stroke-width="1"/>
<line x1="99.5" y1="298.0" x2="99.5" y2="433.0" stroke="#1818a4" stroke-width="3" stroke-opacity="0.25"/>
<line x1="99.5" y1="298.0" x2="99.5" y2="433.0" stroke="#1818a4" stroke-width="1"/>
<line x1="109.5" y1="298.0" x2="109.5" y2="433.0" stroke="#10106c" stroke-width="3" stroke-opacity="0.0"/>
<line x1="109.5" y1="298.0" x2="109.5" y2="433.0" stroke="#10106c" stroke-width="1"/>
<line x1="120.5" y1="298.0" x2="120.5" y2="433.0" stroke="#10106c" stroke-width="3" stroke-opacity="0.0"/>
<line x1="120.5" y1="298.0" x2="120.5" y2="433.0" stroke="#10106c" stroke-width="1"/>
<line x1="130.5" y1="298.0" x2="130.5" y2="433.0" stroke="#10106c" stroke-width="3" stroke-opacity="0.0"/>
<line x1="130.5" y1="298.0" x2="130.5" y2="433.0" stroke="#10106c" stroke-width="1"/>
<line x1="140.5" y1="298.0" x2="140.5" y2="433.0" stroke="#10106c" stroke-width="3" stroke-opacity="0.0"/>
<line x1="140.5" y1="298.0" x2="140.5" y2="433.0" stroke="#10106c" stroke-width="1"/>
<line x1="151.5" y1="298.0" x2="151.5" y2="433.0" stroke="#1818a4" stroke-width="3" stroke-opacity="0.25"/>
<line x1="151.5" y1="298.0" x2="151.5" y2="433.0" stroke="#1818a4" stroke-width="1"/>
<line x1="161.5" y1="298.0" x2="161.5" y2="433.0" stroke="#10106c" stroke-width="3" stroke-opacity="0.0"/>
<line x1="161.5" y1="298.0" x2="161.5" y2="433.0" stroke="#10106c" stroke-width="1"/>
<line x1="172.5" y1="298.0" x2="172.5" y2="433.0" stroke="#10106c" stroke-width="3" stroke-opacity="0.0"/>
<line x1="172.5" y1="298.0" x2="172.5" y2="433.0" stroke="#10106c" stroke-width="1"/>
<line x1="182.5" y1="298.0" x2="182.5" y2="433.0" stroke="#10106c" stroke-width="3" stroke-opacity="0.0"/>
<line x1="182.5" y1="298.0" x2="182.5" y2="433.0" stroke="#10106c" stroke-width="1"/>
<line x1="193.5" y1="298.0" x2="193.5" y2="433.0" stroke="#10106c" stroke-width="3" stroke-opacity="0.0"/>
<line x1="193.5" y1="298.0" x2="193.5" y2="433.0" stroke="#10106c" stroke-width="1"/>
<line x1="203.5" y1="298.0" x2="203.5" y2="433.0" stroke="#1818a4" stroke-width="3" stroke-opacity="0.25"/>
<line x1="203.5" y1="298.0" x2="203.5" y2="433.0" stroke="#1818a4" stroke-width="1"/>
<line x1="213.5" y1="298.0" x2="213.5" y2="433.0" stroke="#10106c" stroke-width="3" stroke-opacity="0.0"/>
<line x1="213.5" y1="298.0" x2="213.5" y2="433.0" stroke="#10106c" stroke-width="1"/>
<line x1="224.5" y1="298.0" x2="224.5" y2="433.0" stroke="#10106c" stroke-width="3" stroke-opacity="0.0"/>
<line x1="224.5" y1="298.0" x2="224.5" y2="433.0" stroke="#10106c" stroke-width="1"/>
<line x1="234.5" y1="298.0" x2="234.5" y2="433.0" stroke="#10106c" stroke-width="3" stroke-opacity="0.0"/>
<line x1="234.5" y1="298.0" x2="234.5" y2="433.0" stroke="#10106c" stroke-width="1"/>
<line x1="245.5" y1="298.0" x2="245.5" y2="433.0" stroke="#10106c" stroke-width="3" stroke-opacity="0.0"/>
<line x1="245.5" y1="298.0" x2="245.5" y2="433.0" stroke="#10106c" stroke-width="1"/>
<line x1="255.5" y1="298.0" x2="255.5" y2="433.0" stroke="#1818a4" stroke-width="3" stroke-opacity="0.25"/>
<line x1="255.5" y1="298.0" x2="255.5" y2="433.0" stroke="#1818a4" stroke-width="1"/>
<line x1="266.5" y1="298.0" x2="266.5" y2="433.0" stroke="#10106c" stroke-width="3" stroke-opacity="0.0"/>
<line x1="266.5" y1="298.0" x2="266.5" y2="433.0" stroke="#10106c" stroke-width="1"/>
<line x1="276.5" y1="298.0" x2="276.5" y2="433.0" stroke="#10106c" stroke-width="3" stroke-opacity="0.0"/>
<line x1="276.5" y1="298.0" x2="276.5" y2="433.0" stroke="#10106c" stroke-width="1"/>
<line x1="287.5" y1="298.0" x2="287.5" y2="433.0" stroke="#10106c" stroke-width="3" stroke-opacity="0.0"/>
<line x1="287.5" y1="298.0" x2="287.5" y2="433.0" stroke="#10106c" stroke-width="1"/>
<line x1="297.5" y1="298.0" x2="297.5" y2="433.0" stroke="#10106c" stroke-width="3" stroke-opacity="0.0"/>
<line x1="297.5" y1="298.0" x2="297.5" y2="433.0" stroke="#10106c" stroke-width="1"/>
<line x1="307.5" y1="298.0" x2="307.5" y2="433.0" stroke="#1818a4" stroke-width="3" stroke-opacity="0.25"/>
<line x1="307.5" y1="298.0" x2="307.5" y2="433.0" stroke="#1818a4" stroke-width="1"/>
<line x1="318.5" y1="298.0" x2="318.5" y2="433.0" stroke="#10106c" stroke-width="3" stroke-opacity="0.0"/>
<line x1="318.5" y1="298.0" x2="318.5" y2="433.0" stroke="#10106c" stroke-width="1"/>
<line x1="328.5" y1="298.0" x2="328.5" y2="433.0" stroke="#10106c" stroke-width="3" stroke-opacity="0.0"/>
<line x1="328.5" y1="298.0" x2="328.5" y2="433.0" stroke="#10106c" stroke-width="1"/>
<line x1="339.5" y1="298.0" x2="339.5" y2="433.0" stroke="#10106c" stroke-width="3" stroke-opacity="0.0"/>
<line x1="339.5" y1="298.0" x2="339.5" y2="433.0" stroke="#10106c" stroke-width="1"/>
<line x1="349.5" y1="298.0" x2="349.5" y2="433.0" stroke="#10106c" stroke-width="3" stroke-opacity="0.0"/>
<line x1="349.5" y1="298.0" x2="349.5" y2="433.0" stroke="#10106c" stroke-width="1"/>
<line x1="360.5" y1="298.0" x2="360.5" y2="433.0" stroke="#1818a4" stroke-width="3" stroke-opacity="0.25"/>
<line x1="360.5" y1="298.0" x2="360.5" y2="433.0" stroke="#1818a4" stroke-width="1"/>
<line x1="370.5" y1="298.0" x2="370.5" y2="433.0" stroke="#10106c" stroke-width="3" stroke-opacity="0.0"/>
<line x1="370.5" y1="298.0" x2="370.5" y2="433.0" stroke="#10106c" stroke-width="1"/>
<line x1="381.5" y1="298.0" x2="381.5" y2="433.0" stroke="#10106c" stroke-width="3" stroke-opacity="0.0"/>
<line x1="381.5" y1="298.0" x2="381.5" y2="433.0" stroke="#10106c" stroke-width="1"/>
<line x1="391.5" y1="298.0" x2="391.5" y2="433.0" stroke="#10106c" stroke-width="3" stroke-opacity="0.0"/>
<line x1="391.5" y1="298.0" x2="391.5" y2="433.0" stroke="#10106c" stroke-width="1"/>
<line x1="401.5" y1="298.0" x2="401.5" y2="433.0" stroke="#10106c" stroke-width="3" stroke-opacity="0.0"/>
<line x1="401.5" y1="298.0" x2="401.5" y2="433.0" stroke="#10106c" stroke-width="1"/>
<line x1="412.5" y1="298.0" x2="412.5" y2="433.0" stroke="#1818a4" stroke-width="3" stroke-opacity="0.25"/>
<line x1="412.5" y1="298.0" x2="412.5" y2="433.0" stroke="#1818a4" stroke-width="1"/>
<line x1="422.5" y1="298.0" x2="422.5" y2="433.0" stroke="#10106c" stroke-width="3" stroke-opacity="0.0"/>
<line x1="422.5" y1="298.0" x2="422.5" y2="433.0" stroke="#10106c" stroke-width="1"/>
<line x1="433.5" y1="298.0" x2="433.5" y2="433.0" stroke="#10106c" stroke-width="3" stroke-opacity="0.0"/>
<line x1="433.5" y1="298.0" x2="433.5" y2="433.0" stroke="#10106c" stroke-width="1"/>
<line x1="443.5" y1="298.0" x2="443.5" y2="433.0" stroke="#10106c" stroke-width="3" stroke-opacity="0.0"/>
<line x1="443.5" y1="298.0" x2="443.5" y2="433.0" stroke="#10106c" stroke-width="1"/>
<line x1="454.5" y1="298.0" x2="454.5" y2="433.0" stroke="#10106c" stroke-width="3" stroke-opacity="0.0"/>
<line x1="454.5" y1="298.0" x2="454.5" y2="433.0" stroke="#10106c" stroke-width="1"/>
<line x1="464.5" y1="298.0" x2="464.5" y2="433.0" stroke="#1818a4" stroke-width="3" stroke-opacity="0.25"/>
<line x1="464.5" y1="298.0" x2="464.5" y2="433.0" stroke="#1818a4" stroke-width="1"/>
<line x1="45" y1="432.5" x2="465" y2="432.5" stroke="#1818a4" stroke-width="3" stroke-opacity="0.25"/>
<line x1="45" y1="432.5" x2="465" y2="432.5" stroke="#1818a4" stroke-width="1"/>
<line x1="45" y1="419.5" x2="465" y2="419.5" stroke="#09093e" stroke-width="3" stroke-opacity="0.0"/>
<line x1="45" y1="419.5" x2="465" y2="419.5" stroke="#09093e" stroke-width="1"/>
<line x1="45" y1="406.5" x2="465" y2="406.5" stroke="#1818a4" stroke-width="3" stroke-opacity="0.25"/>
<line x1="45" y1="406.5" x2="465" y2="406.5" stroke="#1818a4" stroke-width="1"/>
<line x1="45" y1="393.5" x2="465" y2="393.5" stroke="#09093e" stroke-width="3" stroke-opacity="0.0"/>
<line x1="45" y1="393.5" x2="465" y2="393.5" stroke="#09093e" stroke-width="1"/>
<line x1="45" y1="379.5" x2="465" y2="379.5" stroke="#1818a4" stroke-width="3" stroke-opacity="0.25"/>
<line x1="45" y1="379.5" x2="465" y2="379.5" stroke="#1818a4" stroke-width="1"/>
<line x1="45" y1="366.5" x2="465" y2="366.5" stroke="#09093e" stroke-width="3" stroke-opacity="0.0"/>
<line x1="45" y1="366.5" x2="465" y2="366.5" stroke="#09093e" stroke-width="1"/>
<line x1="45" y1="353.5" x2="465" y2="353.5" stroke="#1818a4" stroke-width="3" stroke-opacity="0.25"/>
<line x1="45" y1="353.5" x2="465" y2="353.5" stroke="#1818a4" stroke-width="1"/>
<line x1="45" y1="340.5" x2="465" y2="340.5" stroke="#09093e" stroke-width="3" stroke-opacity="0.0"/>
<line x1="45" y1="340.5" x2="465" y2="340.5" stroke="#09093e" stroke-width="1"/>
<line x1="45" y1="326.5" x2="465" y2="326.5" stroke="#1818a4" stroke-width="3" stroke-opacity="0.25"/>
<line x1="45" y1="326.5" x2="465" y2="326.5" stroke="#1818a4" stroke-width="1"/>
<line x1="45" y1="313.5" x2="465" y2="313.5" stroke="#09093e" stroke-width="3" stroke-opacity="0.0"/>
<line x1="45" y1="313.5" x2="465" y2="313.5" stroke="#09093e" stroke-width="1"/>
<line x1="45" y1="300.5" x2="465" y2="300.5" stroke="#1818a4" stroke-width="3" stroke-opacity="0.25"/>
<line x1="45" y1="300.5" x2="465" y2="300.5" stroke="#1818a4" stroke-width="1"/>
</g>
<rect x="44" y="297.0" width="422" height="1" fill="#000"/>
<rect x="44" y="433.0" width="422" height="1.5" fill="#000"/>
<rect x="44" y="297.0" width="2" height="137" fill="#000"/>
<rect x="465" y="297.0" width="1" height="137" fill="#000"/>
<line x1="42" y1="432.5" x2="44" y2="432.5" stroke="#000"/>
<line x1="42" y1="406.5" x2="44" y2="406.5" stroke="#000"/>
<line x1="42" y1="379.5" x2="44" y2="379.5" stroke="#000"/>
<line x1="42" y1="353.5" x2="44" y2="353.5" stroke="#000"/>
<line x1="42" y1="326.5" x2="44" y2="326.5" stroke="#000"/>
<line x1="42" y1="300.5" x2="44" y2="300.5" stroke="#000"/>
<line x1="465" y1="142.5" x2="468" y2="142.5" stroke="#000"/>
<line x1="465" y1="163.5" x2="468" y2="163.5" stroke="#000"/>
<line x1="465" y1="185.5" x2="468" y2="185.5" stroke="#000"/>
<line x1="465" y1="206.5" x2="468" y2="206.5" stroke="#000"/>
<line x1="465" y1="228.5" x2="468" y2="228.5" stroke="#000"/>
<line x1="465" y1="249.5" x2="468" y2="249.5" stroke="#000"/>
<path d="M46 270.5 L46 268.2 L47 268.2 L47 267.5 L48 267.5 L48 268.5 L49 268.5 L49 267.0 L50 267.0 L50 266.9 L51 266.9 L51 266.4 L52 266.4 L52 263.4 L53 263.4 L53 265.0 L54 265.0 L54 263.8 L55 263.8 L55 264.5 L56 264.5 L56 264.8 L57 264.8 L57 265.0 L58 265.0 L58 264.8 L59 264.8 L59 264.0 L60 264.0 L60 262.2 L61 262.2 L61 263.4 L62 263.4 L62 263.6 L63 263.6 L63 262.4 L64 262.4 L64 262.6 L65 262.6 L65 260.8 L66 260.8 L66 261.2 L67 261.2 L67 261.6 L68 261.6 L68 260.0 L69 260.0 L69 258.4 L70 258.4 L70 268.0 L71 268.0 L71 266.7 L72 266.7 L72 268.9 L73 268.9 L73 267.2 L74 267.2 L74 267.9 L75 267.9 L75 265.6 L76 265.6 L76 266.3 L77 266.3 L77 267.0 L78 267.0 L78 265.3 L79 265.3 L79 264.1 L80 264.1 L80 266.5 L81 266.5 L81 266.3 L82 266.3 L82 265.6 L83 265.6 L83 264.5 L84 264.5 L84 265.3 L85 265.3 L85 266.1 L86 266.1 L86 263.0 L87 263.0 L87 264.8 L88 264.8 L88 264.6 L89 264.6 L89 262.5 L90 262.5 L90 262.8 L91 262.8 L91 263.0 L92 263.0 L92 263.2 L93 263.2 L93 262.3 L94 262.3 L94 263.5 L95 263.5 L95 261.2 L96 261.2 L96 262.4 L97 262.4 L97 260.0 L98 260.0 L98 261.7 L99 261.7 L99 259.9 L100 259.9 L100 261.6 L101 261.6 L101 261.2 L102 261.2 L102 261.4 L103 261.4 L103 259.5 L104 259.5 L104 257.4 L105 257.4 L105 258.3 L106 258.3 L106 258.2 L107 258.2 L107 258.6 L108 258.6 L108 256.9 L109 256.9 L109 256.8 L110 256.8 L110 253.7 L111 253.7 L111 253.1 L112 253.1 L112 252.3 L113 252.3 L113 253.6 L114 253.6 L114 269.5 L115 269.5 L115 269.3 L116 269.3 L116 267.2 L117 267.2 L117 268.5 L118 268.5 L118 268.9 L119 268.9 L119 268.2 L120 268.2 L120 266.6 L121 266.6 L121 267.9 L122 267.9 L122 266.3 L123 266.3 L123 268.6 L124 268.6 L124 265.4 L125 265.4 L125 267.2 L126 267.2 L126 267.0 L127 267.0 L127 264.8 L128 264.8 L128 266.1 L129 266.1 L129 266.9 L130 266.9 L130 266.2 L131 266.2 L131 266.0 L132 266.0 L132 264.8 L133 264.8 L133 264.1 L134 264.1 L134 264.9 L135 264.9 L135 264.2 L136 264.2 L136 265.8 L137 265.8 L137 265.3 L138 265.3 L138 263.8 L139 263.8 L139 263.8 L140 263.8 L140 262.3 L141 262.3 L141 262.3 L142 262.3 L142 262.8 L143 262.8 L143 259.8 L144 259.8 L144 260.3 L145 260.3 L145 261.3 L146 261.3 L146 258.6 L147 258.6 L147 260.9 L148 260.9 L148 257.8 L149 257.8 L149 260.6 L150 260.6 L150 258.5 L151 258.5 L151 258.8 L152 258.8 L152 259.7 L153 259.7 L153 258.5 L154 258.5 L154 258.4 L155 258.4 L155 257.5 L156 257.5 L156 257.1 L157 257.1 L157 257.7 L158 257.7 L158 257.3 L159 257.3 L159 256.4 L160 256.4 L160 255.0 L161 255.0 L161 254.5 L162 254.5 L162 255.8 L163 255.8 L163 267.8 L164 267.8 L164 269.2 L165 269.2 L165 266.1 L166 266.1 L166 266.0 L167 266.0 L167 267.4 L168 267.4 L168 267.8 L169 267.8 L169 267.7 L170 267.7 L170 268.6 L171 268.6 L171 268.5 L172 268.5 L172 268.4 L173 268.4 L173 268.3 L174 268.3 L174 267.6 L175 267.6 L175 267.0 L176 267.0 L176 267.9 L177 267.9 L177 266.6 L178 266.6 L178 265.4 L179 265.4 L179 266.6 L180 266.6 L180 264.9 L181 264.9 L181 265.6 L182 265.6 L182 264.9 L183 264.9 L183 265.6 L184 265.6 L184 262.9 L185 262.9 L185 264.6 L186 264.6 L186 264.9 L187 264.9 L187 264.2 L188 264.2 L188 263.4 L189 263.4 L189 264.2 L190 264.2 L190 261.4 L191 261.4 L191 263.1 L192 263.1 L192 263.1 L193 263.1 L193 261.2 L194 261.2 L194 262.7 L195 262.7 L195 260.7 L196 260.7 L196 259.3 L197 259.3 L197 258.3 L198 258.3 L198 257.9 L199 257.9 L199 259.4 L200 259.4 L200 259.5 L201 259.5 L201 259.0 L202 259.0 L202 258.1 L203 258.1 L203 257.6 L204 257.6 L204 257.4 L205 257.4 L205 257.2 L206 257.2 L206 255.5 L207 255.5 L207 257.3 L208 257.3 L208 256.1 L209 256.1 L209 256.9 L210 256.9 L210 254.2 L211 254.2 L211 254.5 L212 254.5 L212 255.8 L213 255.8 L213 255.1 L214 255.1 L214 255.4 L215 255.4 L215 254.2 L216 254.2 L216 253.0 L217 253.0 L217 254.2 L218 254.2 L218 254.3 L219 254.3 L219 252.5 L220 252.5 L220 254.2 L221 254.2 L221 251.8 L222 251.8 L222 251.0 L223 251.0 L223 252.2 L224 252.2 L224 250.1 L225 250.1 L225 250.5 L226 250.5 L226 267.3 L227 267.3 L227 267.0 L228 267.0 L228 266.8 L229 266.8 L229 268.5 L230 268.5 L230 266.3 L231 266.3 L231 266.0 L232 266.0 L232 266.8 L233 266.8 L233 264.5 L234 264.5 L234 266.3 L235 266.3 L235 266.0 L236 266.0 L236 264.3 L237 264.3 L237 265.5 L238 265.5 L238 263.7 L239 263.7 L239 264.0 L240 264.0 L240 262.7 L241 262.7 L241 264.4 L242 264.4 L242 262.2 L243 262.2 L243 261.9 L244 261.9 L244 264.2 L245 264.2 L245 262.4 L246 262.4 L246 263.6 L247 263.6 L247 261.9 L248 261.9 L248 262.6 L249 262.6 L249 261.3 L250 261.3 L250 260.1 L251 260.1 L251 260.8 L252 260.8 L252 261.5 L253 261.5 L253 261.3 L254 261.3 L254 261.0 L255 261.0 L255 258.7 L256 258.7 L256 261.0 L257 261.0 L257 260.7 L258 260.7 L258 260.9 L259 260.9 L259 258.5 L260 258.5 L260 259.1 L261 259.1 L261 258.2 L262 258.2 L262 259.3 L263 259.3 L263 255.9 L264 255.9 L264 258.0 L265 258.0 L265 258.1 L266 258.1 L266 256.6 L267 256.6 L267 257.1 L268 257.1 L268 256.1 L269 256.1 L269 254.6 L270 254.6 L270 254.1 L271 254.1 L271 253.6 L272 253.6 L272 253.6 L273 253.6 L273 252.6 L274 252.6 L274 253.5 L275 253.5 L275 253.4 L276 253.4 L276 254.3 L277 254.3 L277 252.6 L278 252.6 L278 266.4 L279 266.4 L279 266.4 L280 266.4 L280 266.4 L281 266.4 L281 266.4 L282 266.4 L282 266.4 L283 266.4 L283 266.4 L284 266.4 L284 250.9 L285 250.9 L285 248.9 L286 248.9 L286 247.3 L287 247.3 L287 245.3 L288 245.3 L288 244.9 L289 244.9 L289 243.4 L290 243.4 L290 244.5 L291 244.5 L291 242.0 L292 242.0 L292 241.5 L293 241.5 L293 242.1 L294 242.1 L294 239.7 L295 239.7 L295 239.2 L296 239.2 L296 237.8 L297 237.8 L297 237.3 L298 237.3 L298 234.8 L299 234.8 L299 233.6 L300 233.6 L300 234.5 L301 234.5 L301 231.3 L302 231.3 L302 230.2 L303 230.2 L303 226.5 L304 226.5 L304 226.9 L305 226.9 L305 226.2 L306 226.2 L306 224.4 L307 224.4 L307 249.5 L308 249.5 L308 250.3 L309 250.3 L309 250.7 L310 250.7 L310 250.5 L311 250.5 L311 251.3 L312 251.3 L312 251.1 L313 251.1 L313 251.5 L314 251.5 L314 250.9 L315 250.9 L315 250.7 L316 250.7 L316 250.5 L317 250.5 L317 249.3 L318 249.3 L318 246.6 L319 246.6 L319 247.9 L320 247.9 L320 247.7 L321 247.7 L321 246.4 L322 246.4 L322 244.7 L323 244.7 L323 243.9 L324 243.9 L324 242.7 L325 242.7 L325 243.4 L326 243.4 L326 242.4 L327 242.4 L327 240.4 L328 240.4 L328 239.0 L329 239.0 L329 238.0 L330 238.0 L330 236.8 L331 236.8 L331 234.2 L332 234.2 L332 234.5 L333 234.5 L333 233.3 L334 233.3 L334 234.2 L335 234.2 L335 233.5 L336 233.5 L336 257.6 L337 257.6 L337 256.7 L338 256.7 L338 256.7 L339 256.7 L339 257.3 L340 257.3 L340 256.4 L341 256.4 L341 257.2 L342 257.2 L342 255.7 L343 255.7 L343 255.2 L344 255.2 L344 253.2 L345 253.2 L345 250.2 L346 250.2 L346 251.7 L347 251.7 L347 248.9 L348 248.9 L348 249.7 L349 249.7 L349 247.9 L350 247.9 L350 245.2 L351 245.2 L351 243.4 L352 243.4 L352 244.6 L353 244.6 L353 242.8 L354 242.8 L354 240.6 L355 240.6 L355 241.3 L356 241.3 L356 239.6 L357 239.6 L357 239.9 L358 239.9 L358 239.8 L359 239.8 L359 238.2 L360 238.2 L360 239.1 L361 239.1 L361 239.1 L362 239.1 L362 236.7 L363 236.7 L363 234.8 L364 234.8 L364 232.9 L365 232.9 L365 232.0 L366 232.0 L366 232.5 L367 232.5 L367 255.0 L368 255.0 L368 251.5 L369 251.5 L369 254.0 L370 254.0 L370 251.5 L371 251.5 L371 250.0 L372 250.0 L372 249.5 L373 249.5 L373 250.4 L374 250.4 L374 245.9 L375 245.9 L375 246.0 L376 246.0 L376 242.0 L377 242.0 L377 242.7 L378 242.7 L378 241.7 L379 241.7 L379 240.7 L380 240.7 L380 240.7 L381 240.7 L381 236.7 L382 236.7 L382 236.0 L383 236.0 L383 236.4 L384 236.4 L384 234.7 L385 234.7 L385 231.5 L386 231.5 L386 229.7 L387 229.7 L387 226.3 L388 226.3 L388 220.2 L389 220.2 L389 219.4 L390 219.4 L390 270.5 Z" fill="#00ffff"/>
<line x1="302.5" y1="217" x2="302.5" y2="232" stroke="#00ffff"/>
<line x1="69.5" y1="217.2" x2="69.5" y2="270.5" stroke="#90e8f0" stroke-width="1.2"/>
<line x1="113.5" y1="190.9" x2="113.5" y2="270.5" stroke="#90e8f0" stroke-width="1.2"/>
<line x1="162.5" y1="173.9" x2="162.5" y2="270.5" stroke="#90e8f0" stroke-width="1.2"/>
<line x1="225.5" y1="160.2" x2="225.5" y2="270.5" stroke="#90e8f0" stroke-width="1.2"/>
<line x1="277.5" y1="171.6" x2="277.5" y2="270.5" stroke="#90e8f0" stroke-width="1.2"/>
<line x1="306.5" y1="169.7" x2="306.5" y2="270.5" stroke="#90e8f0" stroke-width="1.2"/>
<line x1="335.5" y1="157.4" x2="335.5" y2="270.5" stroke="#90e8f0" stroke-width="1.2"/>
<line x1="366.5" y1="150.5" x2="366.5" y2="270.5" stroke="#90e8f0" stroke-width="1.2"/>
<line x1="389.5" y1="136" x2="389.5" y2="270.5" stroke="#e0f8f8" stroke-width="1.5"/>
<path d="M46.5 215 L46.5 221 L47 220.9 L48 220.7 L49 220.8 L50 220.3 L51 219.8 L52 220.2 L53 219.4 L54 219.5 L55 219.0 L56 219.3 L57 218.8 L58 218.9 L59 218.4 L60 218.2 L61 217.7 L62 217.8 L63 217.9 L64 217.4 L65 217.2 L66 217.3 L67 216.8 L68 216.6 L69 216.4 L70 216.5 L71 216.0 L72 215.5 L73 215.6 L74 215.7 L75 214.9 L76 215.3 L77 214.8 L78 214.6 L79 214.4 L80 214.2 L81 214.0 L82 214.1 L83 213.6 L84 213.4 L85 213.2 L86 213.3 L87 213.1 L88 212.6 L89 212.7 L90 211.9 L91 212.0 L92 212.1 L93 211.9 L94 211.4 L95 211.5 L96 211.0 L97 210.8 L98 210.6 L99 210.4 L100 209.9 L101 210.0 L102 209.5 L103 209.6 L104 209.1 L105 209.0 L106 208.8 L107 209.2 L108 208.7 L109 208.5 L110 208.6 L111 208.1 L112 207.9 L113 207.4 L114 207.8 L115 207.3 L116 207.2 L117 207.0 L118 206.8 L119 206.9 L120 206.1 L121 206.2 L122 206.0 L123 205.8 L124 205.4 L125 205.8 L126 205.3 L127 205.4 L128 204.9 L129 204.4 L130 204.5 L131 204.4 L132 204.5 L133 203.7 L134 203.8 L135 203.9 L136 203.7 L137 203.6 L138 203.4 L139 202.9 L140 202.7 L141 202.8 L142 202.3 L143 202.5 L144 202.0 L145 201.8 L146 201.9 L147 201.1 L148 201.3 L149 200.8 L150 201.2 L151 200.7 L152 200.5 L153 200.4 L154 200.2 L155 200.3 L156 199.8 L157 199.7 L158 199.2 L159 199.3 L160 198.8 L161 199.0 L162 199.1 L163 198.9 L164 198.4 L165 198.3 L166 198.1 L167 197.6 L168 198.0 L169 197.3 L170 197.4 L171 197.5 L172 197.0 L173 196.9 L174 196.4 L175 196.5 L176 196.4 L177 196.2 L178 196.0 L179 195.9 L180 195.7 L181 195.5 L182 195.6 L183 195.2 L184 194.7 L185 194.5 L186 194.7 L187 194.5 L188 194.3 L189 193.9 L190 194.3 L191 193.8 L192 193.4 L193 193.5 L194 193.3 L195 193.2 L196 192.7 L197 193.1 L198 192.7 L199 192.8 L200 192.4 L201 192.2 L202 192.0 L203 191.6 L204 191.4 L205 191.2 L206 191.4 L207 190.9 L208 191.4 L209 190.9 L210 190.7 L211 190.6 L212 190.4 L213 190.6 L214 190.4 L215 190.2 L216 189.8 L217 189.6 L218 189.2 L219 189.3 L220 188.9 L221 189.3 L222 188.8 L223 188.7 L224 188.2 L225 188.7 L226 188.5 L227 187.8 L228 187.6 L229 187.4 L230 187.6 L231 187.4 L232 187.6 L233 187.1 L234 186.7 L235 186.8 L236 187.0 L237 186.2 L238 186.4 L239 185.9 L240 186.4 L241 185.6 L242 185.8 L243 185.6 L244 185.5 L245 185.3 L246 185.2 L247 185.3 L248 185.2 L249 184.7 L250 184.9 L251 184.4 L252 184.6 L253 184.1 L254 183.7 L255 183.5 L256 183.4 L257 183.5 L258 183.4 L259 183.3 L260 182.8 L261 182.7 L262 182.5 L263 183.0 L264 182.5 L265 182.1 L266 182.5 L267 181.8 L268 182.3 L269 181.8 L270 182.0 L271 181.5 L272 181.7 L273 181.6 L274 180.8 L275 181.0 L276 180.8 L277 180.7 L278 180.9 L279 180.7 L280 180.6 L281 180.1 L282 179.7 L283 179.6 L284 179.7 L285 179.9 L286 179.1 L287 179.6 L288 179.2 L289 179.3 L290 178.9 L291 178.8 L292 178.9 L293 178.5 L294 178.4 L295 178.5 L296 177.8 L297 178.3 L298 177.8 L299 178.0 L300 177.3 L301 177.4 L302 177.0 L303 177.2 L304 177.0 L305 176.9 L306 176.5 L307 176.3 L308 176.5 L309 176.7 L310 176.0 L311 176.1 L312 176.0 L313 175.9 L314 175.4 L315 175.3 L316 175.8 L317 175.7 L318 175.5 L319 175.4 L320 175.3 L321 174.5 L322 174.7 L323 174.9 L324 174.2 L325 174.0 L326 174.2 L327 174.1 L328 174.0 L329 173.8 L330 173.7 L331 173.3 L332 173.5 L333 173.1 L334 173.5 L335 172.8 L336 172.7 L337 172.9 L338 172.7 L339 172.6 L340 172.5 L341 172.4 L342 172.6 L343 172.1 L344 172.3 L345 171.9 L346 172.1 L347 172.0 L348 171.6 L349 171.4 L350 171.0 L351 170.9 L352 170.8 L353 171.0 L354 170.6 L355 171.0 L356 170.9 L357 170.5 L358 170.1 L359 170.6 L360 170.5 L361 170.0 L362 169.9 L363 169.8 L364 170.0 L365 169.6 L366 169.2 L367 169.1 L368 169.0 L369 168.8 L370 169.3 L371 168.9 L372 168.8 L373 168.7 L374 168.3 L375 168.2 L376 168.1 L377 168.3 L378 168.2 L379 167.7 L380 167.6 L381 167.5 L382 167.7 L383 167.6 L384 167.5 L385 167.4 L386 167.3 L387 167.2 L388 166.8 " fill="none" stroke="#68d038" stroke-width="1.1"/>
<line x1="69.5" y1="372.4" x2="69.5" y2="432" stroke="#ece478" stroke-width="1.3"/>
<line x1="113.5" y1="347.7" x2="113.5" y2="432" stroke="#ece478" stroke-width="1.3"/>
<line x1="162.5" y1="325.8" x2="162.5" y2="432" stroke="#ece478" stroke-width="1.3"/>
<line x1="225.5" y1="315.8" x2="225.5" y2="432" stroke="#ece478" stroke-width="1.3"/>
<line x1="277.5" y1="330" x2="277.5" y2="432" stroke="#ece478" stroke-width="1.3"/>
<line x1="306.5" y1="342.8" x2="306.5" y2="432" stroke="#f8f4e0" stroke-width="1.3"/>
<line x1="335.5" y1="341.2" x2="335.5" y2="432" stroke="#ece478" stroke-width="1.3"/>
<line x1="366.5" y1="323.6" x2="366.5" y2="432" stroke="#ece478" stroke-width="1.3"/>
<line x1="389.5" y1="299.5" x2="389.5" y2="432" stroke="#f4f4f0" stroke-width="1.3"/>
<rect x="366" y="428" width="2" height="4" fill="#f0e070"/>
<rect x="373" y="430" width="1" height="2" fill="#f0e8a0"/>
</svg>
<div class="t" style="left:-260px;width:300px;text-align:right;top:128.5px;font-size:11px;color:#000;font-weight:normal;">1000</div>
<div class="t" style="left:-260px;width:300px;text-align:right;top:155.5px;font-size:11px;color:#000;font-weight:normal;">800</div>
<div class="t" style="left:-260px;width:300px;text-align:right;top:182.5px;font-size:11px;color:#000;font-weight:normal;">600</div>
<div class="t" style="left:-260px;width:300px;text-align:right;top:209.5px;font-size:11px;color:#000;font-weight:normal;">400</div>
<div class="t" style="left:-260px;width:300px;text-align:right;top:236.5px;font-size:11px;color:#000;font-weight:normal;">200</div>
<div class="t" style="left:30.3px;width:40px;text-align:center;top:272px">0</div>
<div class="t" style="left:82.4px;width:40px;text-align:center;top:272px">10</div>
<div class="t" style="left:134.6px;width:40px;text-align:center;top:272px">20</div>
<div class="t" style="left:186.8px;width:40px;text-align:center;top:272px">30</div>
<div class="t" style="left:238.9px;width:40px;text-align:center;top:272px">40</div>
<div class="t" style="left:291.1px;width:40px;text-align:center;top:272px">50</div>
<div class="t" style="left:343.2px;width:40px;text-align:center;top:272px">60</div>
<div class="t" style="left:395.4px;width:40px;text-align:center;top:272px">70</div>
<div class="t" style="left:447.5px;width:40px;text-align:center;top:272px">80</div>
<div class="t" style="left:-260px;width:300px;text-align:right;top:290.5px;font-size:11px;color:#000;font-weight:normal;">1000</div>
<div class="t" style="left:-260px;width:300px;text-align:right;top:317.5px;font-size:11px;color:#000;font-weight:normal;">800</div>
<div class="t" style="left:-260px;width:300px;text-align:right;top:344.5px;font-size:11px;color:#000;font-weight:normal;">600</div>
<div class="t" style="left:-260px;width:300px;text-align:right;top:371.5px;font-size:11px;color:#000;font-weight:normal;">400</div>
<div class="t" style="left:-260px;width:300px;text-align:right;top:398.5px;font-size:11px;color:#000;font-weight:normal;">200</div>
<div class="t" style="left:30.3px;width:40px;text-align:center;top:434px">0</div>
<div class="t" style="left:82.4px;width:40px;text-align:center;top:434px">10</div>
<div class="t" style="left:134.6px;width:40px;text-align:center;top:434px">20</div>
<div class="t" style="left:186.8px;width:40px;text-align:center;top:434px">30</div>
<div class="t" style="left:238.9px;width:40px;text-align:center;top:434px">40</div>
<div class="t" style="left:291.1px;width:40px;text-align:center;top:434px">50</div>
<div class="t" style="left:343.2px;width:40px;text-align:center;top:434px">60</div>
<div class="t" style="left:395.4px;width:40px;text-align:center;top:434px">70</div>
<div class="t" style="left:447.5px;width:40px;text-align:center;top:434px">80</div>
<div class="t" style="left:468px;top:133.90000000000003px;font-size:11px;color:#000;font-weight:normal;">48</div>
<div class="t" style="left:468px;top:155.3px;font-size:11px;color:#000;font-weight:normal;">40</div>
<div class="t" style="left:468px;top:176.70000000000002px;font-size:11px;color:#000;font-weight:normal;">32</div>
<div class="t" style="left:468px;top:198.10000000000002px;font-size:11px;color:#000;font-weight:normal;">24</div>
<div class="t" style="left:468px;top:219.5px;font-size:11px;color:#000;font-weight:normal;">16</div>
<div class="t" style="left:468px;top:240.9px;font-size:11px;color:#000;font-weight:normal;">8</div>
<svg style="position:absolute;left:778px;top:0" width="32" height="22"><path d="M4 1 L27 -2 L28 15 L6 20 Z" fill="#d8b838" stroke="#a88820" stroke-width="0.8"/><path d="M5.5 5 L29 1.5 L28.5 15.5 L6.5 20.5 Z" fill="#f6e27a" stroke="#b89a28" stroke-width="0.8"/><path d="M7 7 L27 4" stroke="#fff4b8" stroke-width="1.2"/></svg><div class="t" style="left:766px;top:29px;color:#fff;text-shadow:1px 1px 1px #403020">Музыка из</div>
<svg style="position:absolute;left:856px;top:0" width="34" height="14"><rect x="1" y="0" width="31" height="13" fill="#f4f4fc" stroke="#5070b0"/><rect x="4" y="2" width="20" height="2" fill="#304080"/><rect x="4" y="6" width="24" height="1" fill="#8090c0"/><rect x="4" y="9" width="24" height="1" fill="#8090c0"/></svg><div class="t" style="left:861px;top:19px;color:#fff;text-shadow:1px 1px 1px #403020">миф</div>
<div style="position:absolute;left:621px;top:41px;width:339px;height:475px;background:#ece9d8;border:3px solid #a4b48c;border-top:none;border-radius:8px 8px 0 0;box-sizing:border-box;box-shadow:inset 1px 0 0 #c8d0b4;"></div>
<div style="position:absolute;left:620px;top:69px;width:1px;height:447px;background:#f4f2e8;"></div>
<div style="position:absolute;left:621px;top:41px;width:339px;height:29px;background:linear-gradient(180deg,#e4eac8 0px,#c4d0a4 2px,#b0c08e 7px,#a6b886 13px,#b4c290 19px,#c4cc9a 24px,#c2ca98 26px,#8e9a6c 27px,#8e9a6c 28px,#f2f2e4 28px);border-radius:8px 0 0 0;"></div>
<div class="t" style="left:627px;top:51px;font-size:13px;font-weight:bold;color:#f6f6e4;text-shadow:1px 1px 0 #6a7450;">Disc Quality Test - Statistics</div>
<div style="position:absolute;left:621px;top:513px;width:339px;height:3px;background:#8c9c70;"></div>
<div style="position:absolute;left:635px;top:80px;width:325px;height:377px;background:#fff;border:1px solid #a0a090;border-right:none;box-sizing:border-box;"></div>
<div class="t" style="left:642px;top:83px;font-size:11px;color:#000;font-weight:bold;">Общая информация</div>
<div class="t" style="left:645px;top:97px;font-size:11px;color:#000;font-weight:normal;">Привод</div>
<div class="t" style="left:801px;top:97px;font-size:11px;color:#000;font-weight:normal;letter-spacing:-0.45px">_NEC&nbsp;&nbsp;&nbsp; DVD_RW ND-3540A</div>
<div class="t" style="left:645px;top:111px;font-size:11px;color:#000;font-weight:normal;">Микропрограмма</div>
<div class="t" style="left:801px;top:111px;font-size:11px;color:#000;font-weight:normal;">1.01</div>
<div class="t" style="left:645px;top:125px;font-size:11px;color:#000;font-weight:normal;">Тип диска:</div>
<div class="t" style="left:801px;top:125px;font-size:11px;color:#101060;font-weight:normal;letter-spacing:-0.45px">Audio CD (Plasmon)</div>
<div class="t" style="left:645px;top:139px;font-size:11px;color:#000;font-weight:normal;">Выбранная скорость</div>
<div class="t" style="left:801px;top:139px;font-size:11px;color:#101060;font-weight:normal;">Максимум</div>
<div class="t" style="left:642px;top:153px;font-size:11px;color:#000;font-weight:bold;">C1 errors</div>
<div class="t" style="left:645px;top:167px;font-size:11px;color:#000;font-weight:normal;">Максимум</div>
<div class="t" style="left:801px;top:167px;font-size:11px;color:#701818;font-weight:normal;">895</div>
<div class="t" style="left:645px;top:181px;font-size:11px;color:#000;font-weight:normal;">среднее</div>
<div class="t" style="left:801px;top:181px;font-size:11px;color:#101060;font-weight:normal;">84.87</div>
<div class="t" style="left:645px;top:195px;font-size:11px;color:#000;font-weight:normal;">Итого</div>
<div class="t" style="left:801px;top:195px;font-size:11px;color:#101060;font-weight:normal;">334130</div>
<div class="t" style="left:642px;top:209px;font-size:11px;color:#000;font-weight:bold;">C2 errors</div>
<div class="t" style="left:645px;top:223px;font-size:11px;color:#000;font-weight:normal;">Максимум</div>
<div class="t" style="left:801px;top:223px;font-size:11px;color:#701818;font-weight:normal;">876</div>
<div class="t" style="left:645px;top:237px;font-size:11px;color:#000;font-weight:normal;">среднее</div>
<div class="t" style="left:801px;top:237px;font-size:11px;color:#101060;font-weight:normal;">1.46</div>
<div class="t" style="left:645px;top:251px;font-size:11px;color:#000;font-weight:normal;">Итого</div>
<div class="t" style="left:801px;top:251px;font-size:11px;color:#101060;font-weight:normal;">5745</div>
<div class="t" style="left:642px;top:265px;font-size:11px;color:#000;font-weight:bold;">Jitter</div>
<div class="t" style="left:801px;top:265px;font-size:11px;color:#000;font-weight:normal;letter-spacing:-0.45px">n/a</div>
<div class="t" style="left:642px;top:279px;font-size:11px;color:#000;font-weight:bold;">Статистика сканирования</div>
<div class="t" style="left:645px;top:293px;font-size:11px;color:#000;font-weight:normal;">Время выполнения</div>
<div class="t" style="left:801px;top:293px;font-size:11px;color:#000;font-weight:normal;">2:33</div>
<div class="t" style="left:645px;top:307px;font-size:11px;color:#000;font-weight:normal;">Число выборок</div>
<div class="t" style="left:801px;top:307px;font-size:11px;color:#000;font-weight:normal;">16285</div>
<div class="t" style="left:645px;top:321px;font-size:11px;color:#000;font-weight:normal;">Средний интервал сканиро...</div>
<div class="t" style="left:801px;top:321px;font-size:11px;color:#000;font-weight:normal;letter-spacing:-0.45px">4.14 sec</div>
<div class="t" style="left:645px;top:335px;font-size:11px;color:#000;font-weight:normal;">Устранено ошибок</div>
<div class="t" style="left:801px;top:335px;font-size:11px;color:#000;font-weight:normal;">0</div>
<div style="position:absolute;left:635px;top:468px;width:325px;height:34px;border:1px solid #d0d0bf;border-right:none;border-radius:4px 0 0 4px;box-sizing:border-box;"></div>
<div style="position:absolute;left:736px;top:474px;width:74px;height:21px;border:1px solid #6f7458;background:linear-gradient(180deg,#fcfcf2,#f0eedc 70%,#dcd8c0);border-radius:3px;box-sizing:border-box;"></div>
<div class="t" style="left:759px;top:478px;font-size:11px;color:#000;font-weight:normal;">Copy</div>
<div style="position:absolute;left:868px;top:474px;width:73px;height:21px;border:1px solid #5a7040;box-shadow:inset 0 0 0 1px #a8c080;background:linear-gradient(180deg,#fcfcf2,#f0eedc 70%,#dcd8c0);border-radius:3px;box-sizing:border-box;"></div>
<div class="t" style="left:890px;top:478px;font-size:11px;color:#000;font-weight:normal;">Close</div>

</body></html>
